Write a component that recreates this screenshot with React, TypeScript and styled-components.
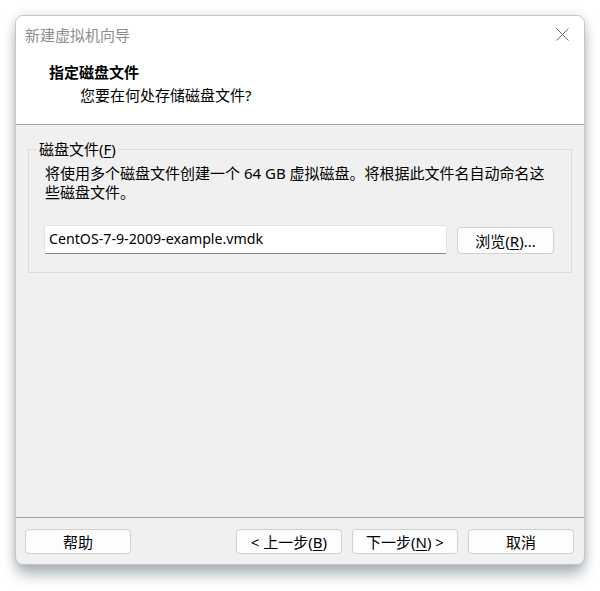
import React from "react";
import styled, {createGlobalStyle} from "styled-components";

const GlobalStyle = createGlobalStyle`
  html, body {
    margin: 0;
    padding: 0;
    background: #ffffff;
  }
  body {
    font-family: "Noto Sans", "Noto Sans CJK SC", sans-serif;
    font-size: 15px;
    color: #000;
  }
`;

const Page = styled.div`
  width: 600px;
  height: 591px;
  padding: 15px 0 0 15px;
  box-sizing: border-box;
`;

const Window = styled.div`
  width: 570px;
  height: 550px;
  box-sizing: border-box;
  display: flex;
  flex-direction: column;
  background: #f0f0f0;
  border: 1px solid #c4c4c4;
  border-radius: 8px;
  overflow: hidden;
  box-shadow: 0 12px 14px -2px rgba(95, 118, 128, 0.45),
  0 2px 12px rgba(0, 0, 0, 0.18);
`;

const TitleBar = styled.div`
  height: 39px;
  display: flex;
  align-items: center;
  justify-content: space-between;
  padding: 0 12px 0 9px;
  background: #fff;
`;

const Title = styled.span`
  color: #8e8e8e;
  font-size: 15px;
  line-height: 20px;
  margin-top: -2px;
`;

const CloseButton = styled.div`
  width: 20px;
  height: 20px;
  display: flex;
  align-items: center;
  justify-content: center;
  margin-top: -3px;
`;

const Intro = styled.div`
  height: 70px;
  box-sizing: border-box;
  padding: 7px 0 0 33px;
  background: #fff;
  border-bottom: 1px solid #a0a0a0;
`;

const Heading = styled.div`
  font-weight: bold;
  line-height: 20px;
`;

const SubHeading = styled.div`
  line-height: 20px;
  margin: 3px 0 0 31px;
`;

const Body = styled.div`
  flex: 1;
  padding: 14px 12px 0;
`;

const GroupBox = styled.fieldset`
  margin: 0;
  padding: 0 16px 18px 16px;
  border: 1px solid #dcdcdc;
`;

const Legend = styled.legend`
  margin-left: -8px;
  padding: 0 2px;
  line-height: 20px;
`;

const Key = styled.span`
  text-decoration: underline;
  text-underline-offset: 2px;
`;

const Description = styled.p`
  margin: 5px 0 0;
  line-height: 19px;
`;

const PathRow = styled.div`
  display: flex;
  align-items: flex-end;
  gap: 10px;
  margin: 23px 0 0 -1px;
`;

const PathInput = styled.div`
  width: 403px;
  height: 29px;
  box-sizing: border-box;
  display: flex;
  align-items: center;
  padding: 0 0 3px 4px;
  font-size: 14.2px;
  background: #fff;
  border: 1px solid #e3e3e3;
  border-bottom-color: #8a8a8a;
  border-radius: 2px;
`;

const Button = styled.div<{ $width?: number }>`
  width: ${p => p.$width ?? 106}px;
  height: 25px;
  box-sizing: border-box;
  display: flex;
  align-items: center;
  justify-content: center;
  background: #fdfdfd;
  border: 1px solid #d0d0d0;
  border-radius: 4px;
  line-height: 20px;
`;

const BrowseButton = styled(Button)`
  height: 27px;
`;

const Footer = styled.div`
  display: flex;
  justify-content: space-between;
  padding: 11px 10px 10px 9px;
  border-top: 1px solid #a0a0a0;
`;

const ButtonGroup = styled.div`
  display: flex;
  gap: 10px;
`;

const App = () => {
    return (
        <Page>
            <GlobalStyle/>
            <Window>
                <TitleBar>
                    <Title>新建虚拟机向导</Title>
                    <CloseButton>
                        <svg width="13" height="13" viewBox="0 0 13 13">
                            <path d="M0.5 0.5 L12.5 12.5 M12.5 0.5 L0.5 12.5" stroke="#6e6e6e" strokeWidth="1" fill="none"/>
                        </svg>
                    </CloseButton>
                </TitleBar>
                <Intro>
                    <Heading>指定磁盘文件</Heading>
                    <SubHeading>您要在何处存储磁盘文件?</SubHeading>
                </Intro>
                <Body>
                    <GroupBox>
                        <Legend>磁盘文件(<Key>F</Key>)</Legend>
                        <Description>
                            将使用多个磁盘文件创建一个 64 GB 虚拟磁盘。将根据此文件名自动命名这些磁盘文件。
                        </Description>
                        <PathRow>
                            <PathInput>CentOS-7-9-2009-example.vmdk</PathInput>
                            <BrowseButton $width={97}>浏览(<Key>R</Key>)...</BrowseButton>
                        </PathRow>
                    </GroupBox>
                </Body>
                <Footer>
                    <Button>帮助</Button>
                    <ButtonGroup>
                        <Button>&lt; 上一步(<Key>B</Key>)</Button>
                        <Button>下一步(<Key>N</Key>) &gt;</Button>
                        <Button>取消</Button>
                    </ButtonGroup>
                </Footer>
            </Window>
        </Page>
    )
}

export default App
